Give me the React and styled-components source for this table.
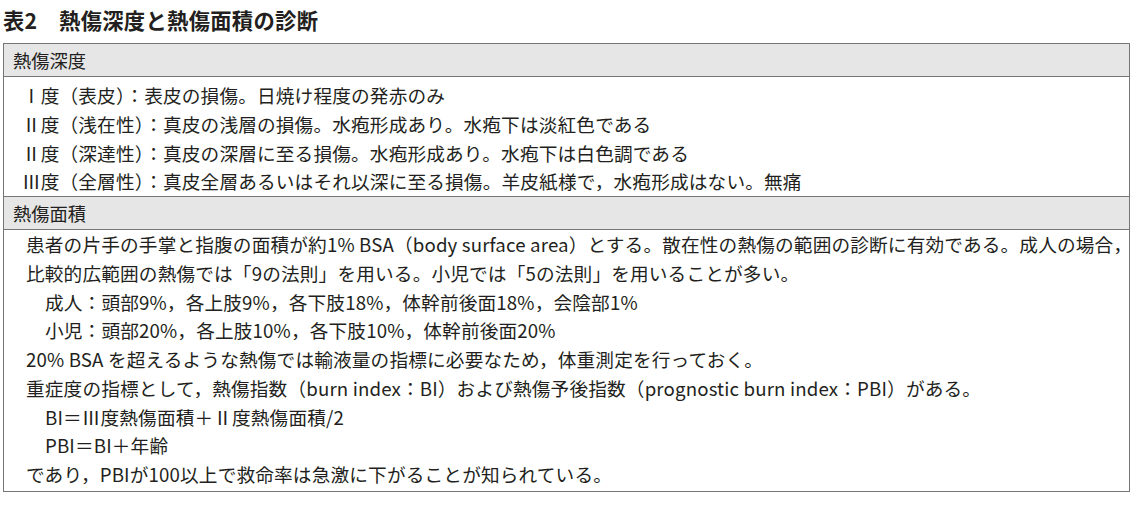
import React from 'react';
import styled, { createGlobalStyle } from 'styled-components';

const GlobalStyle = createGlobalStyle`
    html, body {
        margin: 0;
        padding: 0;
        background: #ffffff;
    }
    body {
        font-family: "Noto Sans CJK JP", "Noto Sans", sans-serif;
        color: #231f20;
    }
`;

const Page = styled.div`
    width: 1138px;
    height: 505px;
    padding: 6px 8px 0 3px;
    box-sizing: border-box;
`;

const Title = styled.h1`
    margin: 0 0 9px;
    font-size: 21.3px;
    font-weight: 700;
    line-height: 28px;
    letter-spacing: 0.3px;
    white-space: pre;
`;

const Table = styled.div`
    border: 1.5px solid #767676;
    display: flex;
    flex-direction: column;
`;

const SectionHead = styled.div`
    background: #e6e6e6;
    height: 32px;
    display: flex;
    align-items: center;
    padding-left: 9px;
    font-size: 18.3px;
    border-bottom: 1.5px solid #767676;
    ${(p) => p.$divider && 'border-top: 1.5px solid #767676;'}
`;

const SectionBody = styled.div`
    padding: ${(p) => p.$pad};
`;

const Line = styled.div`
    font-size: 18.67px;
    line-height: 28.75px;
    letter-spacing: 0.15px;
    white-space: nowrap;
    padding-left: ${(p) => (p.$indent ? '19px' : '0')};
`;

// ローマ数字は全角幅の箱に中央寄せ
const Numeral = styled.span`
    display: inline-block;
    width: 1em;
    text-align: center;
`;

// 文中の Ⅰ Ⅱ Ⅲ を Numeral に差し替える
const withNumerals = (text) =>
    text.split(/([ⅠⅡⅢ])/).map((part, i) =>
        /^[ⅠⅡⅢ]$/.test(part) ? <Numeral key={i}>{part}</Numeral> : part
    );

const depth = [
    'Ⅰ度（表皮）：表皮の損傷。日焼け程度の発赤のみ',
    'Ⅱ度（浅在性）：真皮の浅層の損傷。水疱形成あり。水疱下は淡紅色である',
    'Ⅱ度（深達性）：真皮の深層に至る損傷。水疱形成あり。水疱下は白色調である',
    'Ⅲ度（全層性）：真皮全層あるいはそれ以深に至る損傷。羊皮紙様で，水疱形成はない。無痛',
];

const area = [
    { text: '患者の片手の手掌と指腹の面積が約1% BSA（body surface area）とする。散在性の熱傷の範囲の診断に有効である。成人の場合，' },
    { text: '比較的広範囲の熱傷では「9の法則」を用いる。小児では「5の法則」を用いることが多い。' },
    { text: '成人：頭部9%，各上肢9%，各下肢18%，体幹前後面18%，会陰部1%', indent: true },
    { text: '小児：頭部20%，各上肢10%，各下肢10%，体幹前後面20%', indent: true },
    { text: '20% BSA を超えるような熱傷では輸液量の指標に必要なため，体重測定を行っておく。' },
    { text: '重症度の指標として，熱傷指数（burn index：BI）および熱傷予後指数（prognostic burn index：PBI）がある。' },
    { text: 'BI＝Ⅲ度熱傷面積＋Ⅱ度熱傷面積/2', indent: true },
    { text: 'PBI＝BI＋年齢', indent: true },
    { text: 'であり，PBIが100以上で救命率は急激に下がることが知られている。' },
];

const App = () => {
    return (
        <>
            <GlobalStyle />
            <Page>
                <Title>表2　熱傷深度と熱傷面積の診断</Title>
                <Table>
                    <SectionHead>熱傷深度</SectionHead>
                    <SectionBody $pad="4px 0 0 18px">
                        {depth.map((t) => (
                            <Line key={t}>{withNumerals(t)}</Line>
                        ))}
                    </SectionBody>
                    <SectionHead $divider>熱傷面積</SectionHead>
                    <SectionBody $pad="0 0 2px 22px">
                        {area.map((l) => (
                            <Line key={l.text} $indent={l.indent}>
                                {withNumerals(l.text)}
                            </Line>
                        ))}
                    </SectionBody>
                </Table>
            </Page>
        </>
    );
};

export default App;
